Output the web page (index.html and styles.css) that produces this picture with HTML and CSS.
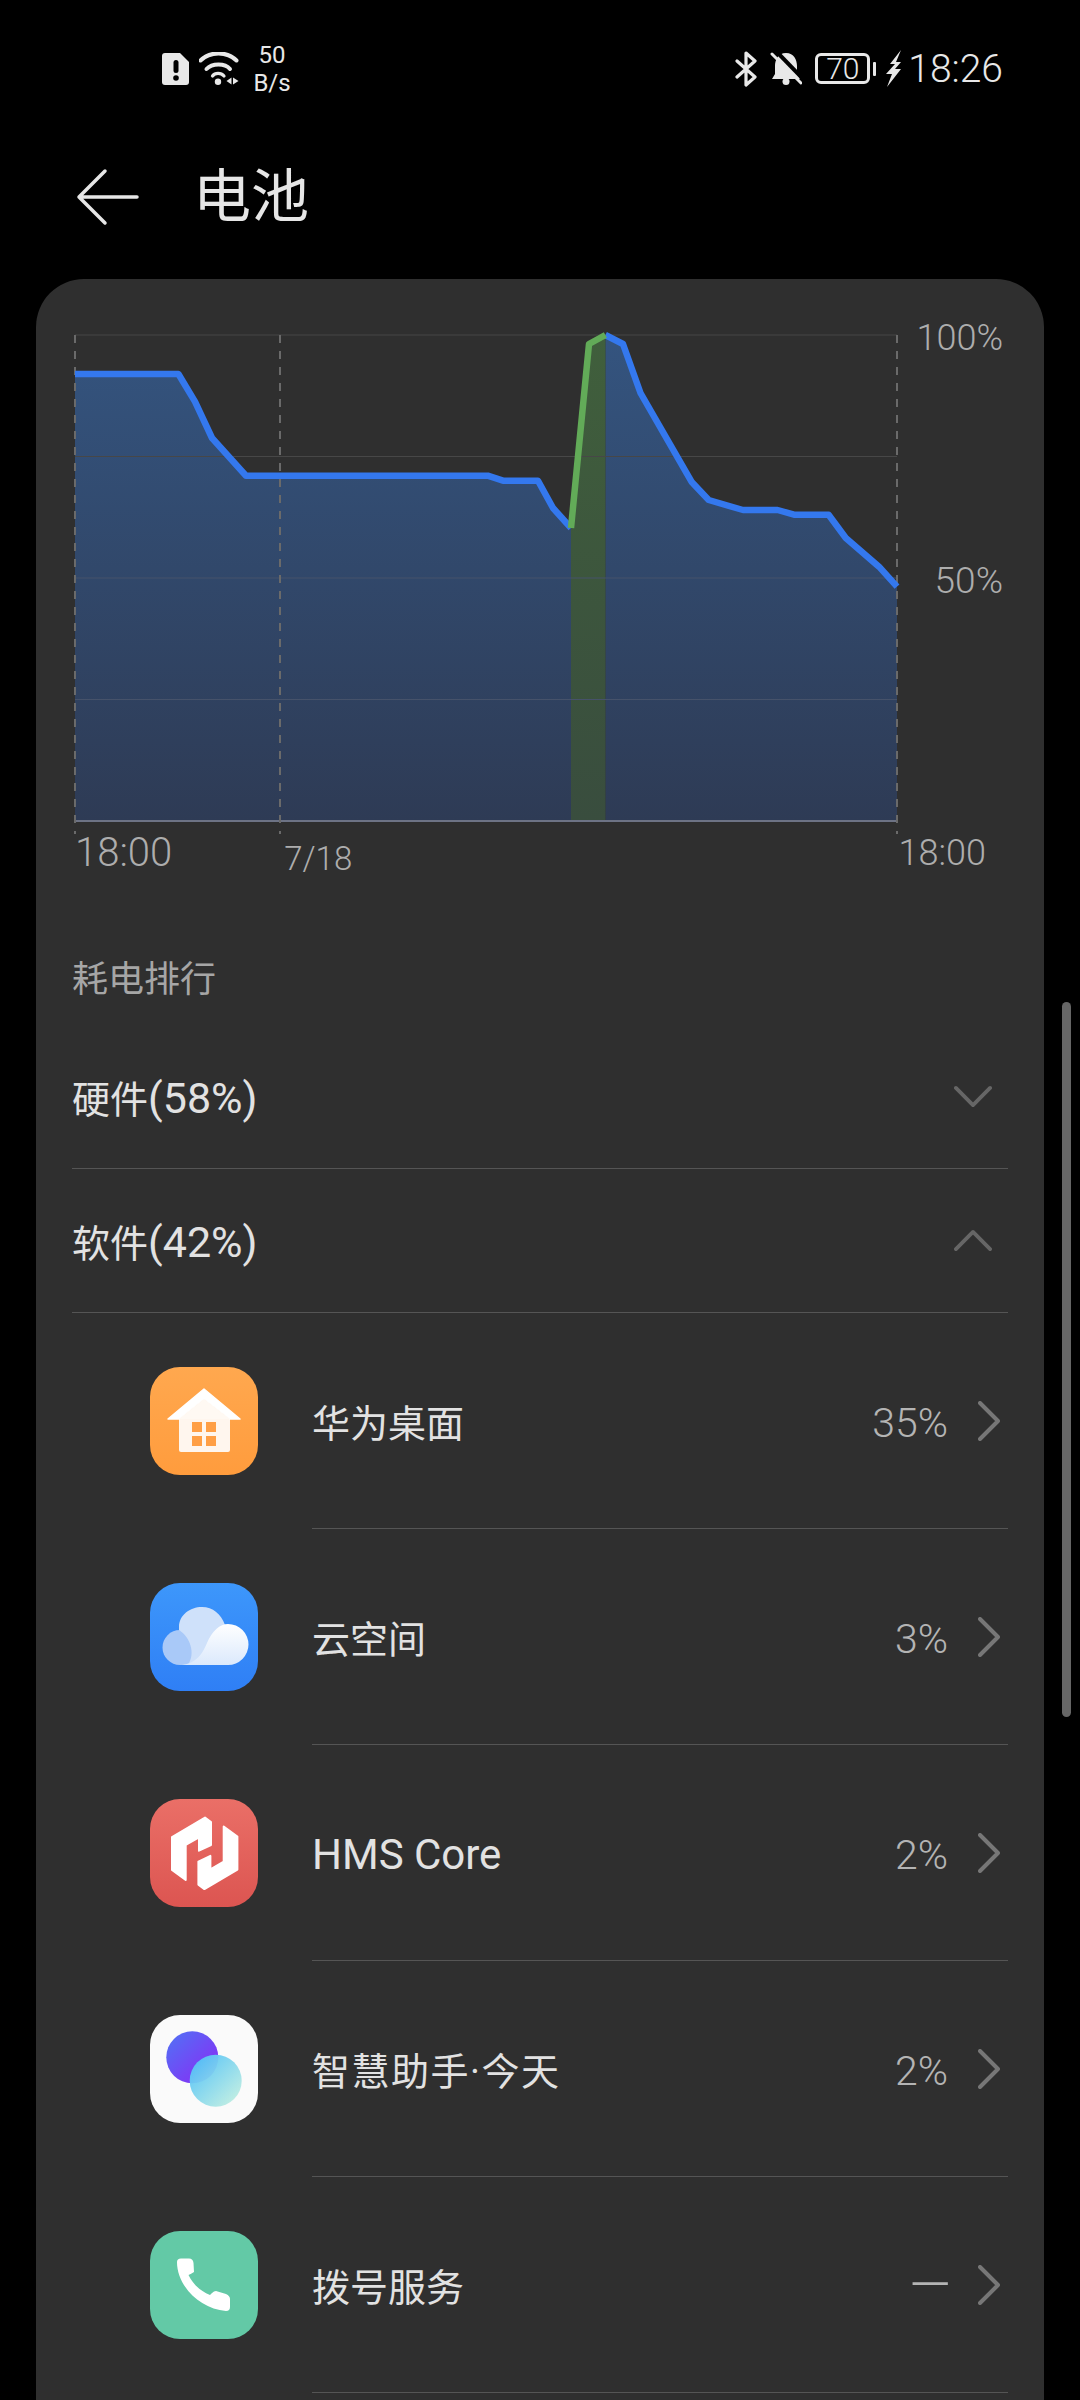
FILE: index.html
```html
<!DOCTYPE html>
<html lang="zh">
<head>
<meta charset="utf-8">
<title>电池</title>
<link rel="stylesheet" href="styles.css">
</head>
<body>
<div class="page">
  <header class="status">
    <div class="status-left">
      <svg class="sim" viewBox="0 0 27 32"><path class="ic-fill" d="M3 0H18L27 9V29a3 3 0 0 1-3 3H3a3 3 0 0 1-3-3V3a3 3 0 0 1 3-3Z"/><rect class="ic-black" x="11.5" y="7" width="5" height="13" rx="2.5"/><circle class="ic-black" cx="14" cy="25" r="2.8"/></svg>
      <svg class="wifi" viewBox="0 0 41 33"><path class="ic-line" d="M1.5 8.5C11 -1 28 -1 37.5 8.5"/><path class="ic-line" d="M7.5 17C13 11 26 11 31 17"/><path class="ic-line thin" d="M13.5 24C16 20.500 22 20.500 25 24"/><circle class="ic-fill" cx="19" cy="29.700" r="3.200"/><path class="ic-fill" d="M27.500 29L32.500 25.500V32.500Z"/><path class="ic-fill" d="M34 25.500L39.500 29L34 32.500Z"/></svg>
      <div class="speed"><span>50</span><span>B/s</span></div>
    </div>
    <div class="status-right">
      <svg class="bt" viewBox="0 0 22 36"><path class="ic-line thin" d="M2 10L20 26L11 34V2L20 10L2 26"/></svg>
      <svg class="bell" viewBox="0 0 32 33"><path class="ic-fill" d="M16 1C8 1 5 8 5 14V22L2 27H30L27 22V14C27 8 24 1 16 1Z"/><circle class="ic-fill" cx="16" cy="29.500" r="3.500"/><path class="slash-gap" d="M6 -1L35 29"/><path class="slash" d="M2 2L31 31"/></svg>
      <div class="battery"><div class="battery-body">70</div><div class="battery-nub"></div></div>
      <svg class="bolt" viewBox="0 0 15 37"><path class="ic-fill" d="M15 0L4 14H9L0 24H6L1 37L15 19H9L15 12H10Z"/></svg>
      <span class="time">18:26</span>
    </div>
  </header>

  <div class="titlebar">
    <svg class="back" viewBox="0 0 60 54"><path d="M28 1L2 27L28 53M2 27H60"/></svg>
    <h1 class="title">电池</h1>
  </div>

  <main class="card">
    <div class="chart-row">
      <svg class="chart" viewBox="72 330 826 506">
        <defs>
          <linearGradient id="fillBlue" gradientUnits="userSpaceOnUse" x1="0" y1="335" x2="0" y2="821">
            <stop offset="0" stop-color="#34547f"/>
            <stop offset="1" stop-color="#2e3b55"/>
          </linearGradient>
          <linearGradient id="fillGreen" gradientUnits="userSpaceOnUse" x1="0" y1="335" x2="0" y2="821">
            <stop offset="0" stop-color="#405f3c"/>
            <stop offset="1" stop-color="#394d3e"/>
          </linearGradient>
        </defs>
        <path fill="url(#fillBlue)" d="M75 374H178.400L195 401.700L212 438L246 475.700H487.700L503 480.700H538L553 508L571 528V821H75Z"/>
        <path fill="url(#fillBlue)" d="M605.400 335L623 344L640.500 393L691.500 481.700L708.700 500L743 510H777.600L794 514.700H828.600L845.800 538L879 566.700L897 586.700V821H605.400Z"/>
        <path fill="url(#fillGreen)" d="M571 528L589 344L605.400 335V821H571Z"/>
        <path class="grid" d="M75 335H897M75 456.500H897"/>
        <path class="grid faint" d="M75 578H897M75 699.500H897"/>
        <path class="base" d="M75 821H897"/>
        <path class="dash" d="M75 335V834M280 335V834M897 335V834"/>
        <path class="line-blue" d="M75 374H178.400L195 401.700L212 438L246 475.700H487.700L503 480.700H538L553 508L571 528"/>
        <path class="line-blue" d="M605.400 335L623 344L640.500 393L691.500 481.700L708.700 500L743 510H777.600L794 514.700H828.600L845.800 538L879 566.700L897 586.700"/>
        <path class="line-green" d="M571 528L589 344L605.400 335"/>
      </svg>
      <div class="y-labels"><span class="y-top">100%</span><span>50%</span></div>
    </div>
    <div class="x-labels">
      <span class="x-first">18:00</span>
      <span class="x-date">7/18</span>
      <span class="x-last">18:00</span>
    </div>

    <h2 class="section">耗电排行</h2>

    <div class="group">
      <span>硬件<span class="lat">(58%)</span></span>
      <svg class="fold" viewBox="0 0 40 24"><path d="M2 3L20 21L38 3"/></svg>
    </div>
    <div class="group">
      <span>软件<span class="lat">(42%)</span></span>
      <svg class="fold" viewBox="0 0 40 24"><path d="M2 21L20 3L38 21"/></svg>
    </div>

    <div class="app">
      <svg class="app-icon" viewBox="0 0 108 108">
        <defs><linearGradient id="gOrange" x1="0" y1="0" x2="0" y2="1"><stop offset="0" stop-color="#ffa84f"/><stop offset="1" stop-color="#ff9c3d"/></linearGradient></defs>
        <rect width="108" height="108" rx="30" fill="url(#gOrange)"/>
        <path fill="#fff6ee" d="M29 48H80V83a2 2 0 0 1-2 2H31a2 2 0 0 1-2-2Z"/>
        <path fill="#ffffff" stroke="#ffffff" stroke-width="1.500" stroke-linejoin="round" d="M54 22L90 52H80L54 32L29 52H18Z"/>
        <path fill="#fff9f3" d="M54 32L80 52H29Z"/>
        <path fill="#ff9f45" d="M42 55H52V65H42ZM56 55H66V65H56ZM42 69H52V79H42ZM56 69H66V79H56Z"/>
      </svg>
      <div class="app-body"><span class="app-name">华为桌面</span><span class="pct">35%</span><svg class="chev" viewBox="0 0 22 40"><path d="M2 2L20 20L2 38"/></svg></div>
    </div>

    <div class="app">
      <svg class="app-icon" viewBox="0 0 108 108">
        <defs>
          <linearGradient id="gBlue" x1="0" y1="0" x2="0" y2="1"><stop offset="0" stop-color="#3d97fb"/><stop offset="1" stop-color="#2f7ff5"/></linearGradient>
          <linearGradient id="gCloud" x1="0" y1="0" x2="0" y2="1"><stop offset="0" stop-color="#ffffff"/><stop offset="1" stop-color="#dbe9fc"/></linearGradient>
        </defs>
        <rect width="108" height="108" rx="30" fill="url(#gBlue)"/>
        <path fill="#a9c9f8" d="M30 47A17.500 17.500 0 0 0 30 82H42C49 72 43 52 30 47Z"/>
        <path fill="#cfe1fa" d="M29 44C29 32 40 24 52 24C63 24 71 31 75 42L60 82H38C46 70 40 54 29 47Z"/>
        <path fill="url(#gCloud)" d="M32 82C46 80 52 72 57 60C62 48 70 41 78 41A20.500 20.500 0 0 1 78 82Z"/>
      </svg>
      <div class="app-body"><span class="app-name">云空间</span><span class="pct">3%</span><svg class="chev" viewBox="0 0 22 40"><path d="M2 2L20 20L2 38"/></svg></div>
    </div>

    <div class="app">
      <svg class="app-icon" viewBox="0 0 108 108">
        <defs><linearGradient id="gRed" x1="0" y1="0" x2="0" y2="1"><stop offset="0" stop-color="#ea6f67"/><stop offset="1" stop-color="#dc5551"/></linearGradient></defs>
        <rect width="108" height="108" rx="30" fill="url(#gRed)"/>
        <path fill="#fff" stroke="#fff" stroke-width="2" stroke-linejoin="round" d="M22 38L55 18.500L61 23V46L49 51.700V38.300L35.700 46V81L22 71Z"/>
        <path fill="#fff" stroke="#fff" stroke-width="2" stroke-linejoin="round" d="M87.400 70.600L54.400 90.100L48.400 85.600V62.600L60.400 56.900V70.300L73.700 62.600V27.600L87.400 37.600Z"/>
      </svg>
      <div class="app-body"><span class="app-name lat">HMS Core</span><span class="pct">2%</span><svg class="chev" viewBox="0 0 22 40"><path d="M2 2L20 20L2 38"/></svg></div>
    </div>

    <div class="app">
      <svg class="app-icon" viewBox="0 0 108 108">
        <defs>
          <linearGradient id="gPurple" x1="0" y1="0" x2="1" y2="1"><stop offset="0" stop-color="#4f74f5"/><stop offset="1" stop-color="#8e25f5"/></linearGradient>
          <linearGradient id="gTeal" x1="0" y1="0" x2="1" y2="1"><stop offset="0" stop-color="#45bdfa"/><stop offset="1" stop-color="#ccf3df"/></linearGradient>
        </defs>
        <rect width="108" height="108" rx="30" fill="#fafafa"/>
        <circle cx="42.300" cy="42.300" r="26" fill="url(#gPurple)"/>
        <circle cx="65.700" cy="65.700" r="26" fill="url(#gTeal)" fill-opacity="0.950"/>
      </svg>
      <div class="app-body"><span class="app-name name-wide">智慧助手·今天</span><span class="pct">2%</span><svg class="chev" viewBox="0 0 22 40"><path d="M2 2L20 20L2 38"/></svg></div>
    </div>

    <div class="app">
      <svg class="app-icon" viewBox="0 0 108 108">
        <rect width="108" height="108" rx="30" fill="#63c9a6"/>
        <path fill="#fff" d="M27 31Q27 27.500 31 27.500H39Q43 27.500 43.500 32L44 41Q41 43 38.500 44C43 53 50 60 60 64L62 62Q64 60 66 60L76 63Q80 65 80 68V76Q80 80 76 80C50 78 27 55 27 31Z"/>
      </svg>
      <div class="app-body"><span class="app-name">拨号服务</span><span class="pct pct-none">—</span><svg class="chev" viewBox="0 0 22 40"><path d="M2 2L20 20L2 38"/></svg></div>
    </div>
  </main>

  <div class="scrollbar"></div>
</div>
</body>
</html>
```

FILE: styles.css
```css
* { box-sizing: border-box; }
html, body { margin: 0; padding: 0; background: #000; }
body { font-family: Roboto, "Noto Sans CJK SC", sans-serif; }
.page { position: relative; width: 1080px; height: 2400px; overflow: hidden; background: #000; }

/* status bar */
.status { height: 100px; padding: 37px 77px 0 162px; display: flex; justify-content: space-between; align-items: center; color: #e8e8e8; }
.status-left, .status-right { display: flex; align-items: center; }
.sim { width: 27px; height: 32px; margin-right: 10px; }
.wifi { width: 41px; height: 33px; margin-right: 11px; }
.speed { display: flex; flex-direction: column; align-items: center; width: 42px; font-size: 24px; line-height: 28px; font-weight: 400; }
.ic-fill { fill: #e8e8e8; }
.ic-black { fill: #000; }
.ic-line { fill: none; stroke: #e8e8e8; stroke-width: 4; stroke-linecap: round; stroke-linejoin: round; }
.ic-line.thin { stroke-width: 3.2; }
.bt { width: 22px; height: 36px; margin-right: 13px; }
.bell { width: 32px; height: 33px; margin-right: 13px; overflow: hidden; }
.slash { fill: none; stroke: #e8e8e8; stroke-width: 3; stroke-linecap: round; }
.slash-gap { fill: none; stroke: #000; stroke-width: 4; }
.battery { display: flex; align-items: center; margin-right: 10px; }
.battery-body { width: 55px; height: 31px; border: 3px solid #e8e8e8; border-radius: 6px; font-size: 30px; font-weight: 300; line-height: 25px; text-align: center; }
.battery-nub { width: 3px; height: 14px; margin-left: 3px; background: #e8e8e8; border-radius: 1px; }
.bolt { width: 15px; height: 37px; margin-right: 7px; }
.time { font-size: 39px; line-height: 44px; font-weight: 300; }

/* title bar */
.titlebar { height: 179px; padding: 15px 0 0 77px; display: flex; align-items: center; gap: 56px; }
.back { width: 60px; height: 54px; overflow: visible; }
.back path { fill: none; stroke: #e6e6e6; stroke-width: 3.5; stroke-linecap: round; stroke-linejoin: round; }
.title { margin: 0; font-size: 58px; line-height: 70px; font-weight: 400; color: #e6e6e6; }

/* card */
.card { height: 2121px; margin: 0 36px; padding: 51px 36px 0; background: #2f2f2f; border-radius: 48px 48px 0 0; }

/* chart */
.chart-row { display: flex; align-items: flex-start; }
.chart { width: 826px; height: 506px; overflow: visible; flex: none; }
.grid { fill: none; stroke: #474747; stroke-width: 1; }
.grid.faint { stroke: #46526a; }
.base { fill: none; stroke: #6d7385; stroke-width: 2; }
.dash { fill: none; stroke: #6a6a6a; stroke-width: 2; stroke-dasharray: 8 8; }
.line-blue, .line-green { fill: none; stroke-width: 6.500; stroke-linejoin: round; }
.line-blue { stroke: #3478ee; }
.line-green { stroke: #62ab58; }
.y-labels { width: 105px; margin-top: -14px; display: flex; flex-direction: column; gap: 199px; align-items: flex-end; font-size: 37px; line-height: 44px; font-weight: 300; color: #adadad; }
.y-top { font-size: 36px; }
.x-labels { display: flex; align-items: flex-start; margin-top: -5px; padding: 0 22px 0 3px; line-height: 44px; font-weight: 300; color: #adadad; }
.x-first { font-size: 40px; }
.x-date { font-size: 33px; margin: 6px 0 0 112px; }
.x-last { font-size: 36px; margin-left: auto; }

/* ranking */
.section { margin: 77px 0 0; height: 67px; font-size: 36px; line-height: 44px; font-weight: 400; color: #a6a6a6; }
.group { height: 144px; display: flex; justify-content: space-between; align-items: center; padding-right: 16px; border-bottom: 1.500px solid #555; font-size: 38px; color: #e2e2e2; }
.lat { font-size: 43px; }
.fold { width: 38px; height: 23px; }
.fold path { fill: none; stroke: #666; stroke-width: 4; stroke-linecap: round; stroke-linejoin: round; }

.app { display: flex; padding-left: 78px; }
.app-icon { width: 108px; height: 108px; margin: 54px 54px 0 0; flex: none; }
.app-body { flex: 1; height: 216px; display: flex; align-items: center; padding-right: 8px; border-bottom: 1.500px solid #555; }
.app-name { flex: 1; font-size: 38px; color: #e2e2e2; }
.app-name.lat { font-size: 42px; padding-top: 4px; }
.name-wide { letter-spacing: 1.500px; }
.pct { padding-top: 4px; font-size: 41px; font-weight: 300; color: #b4b4b4; }
.pct-none { font-size: 54px; margin-right: -3px; padding-top: 0; }
.chev { width: 22px; height: 40px; margin-left: 30px; }
.chev path { fill: none; stroke: #777; stroke-width: 4; stroke-linecap: round; stroke-linejoin: round; }

.scrollbar { position: absolute; top: 1002px; left: 1062px; width: 9px; height: 715px; border-radius: 5px; background: #666; }
```
